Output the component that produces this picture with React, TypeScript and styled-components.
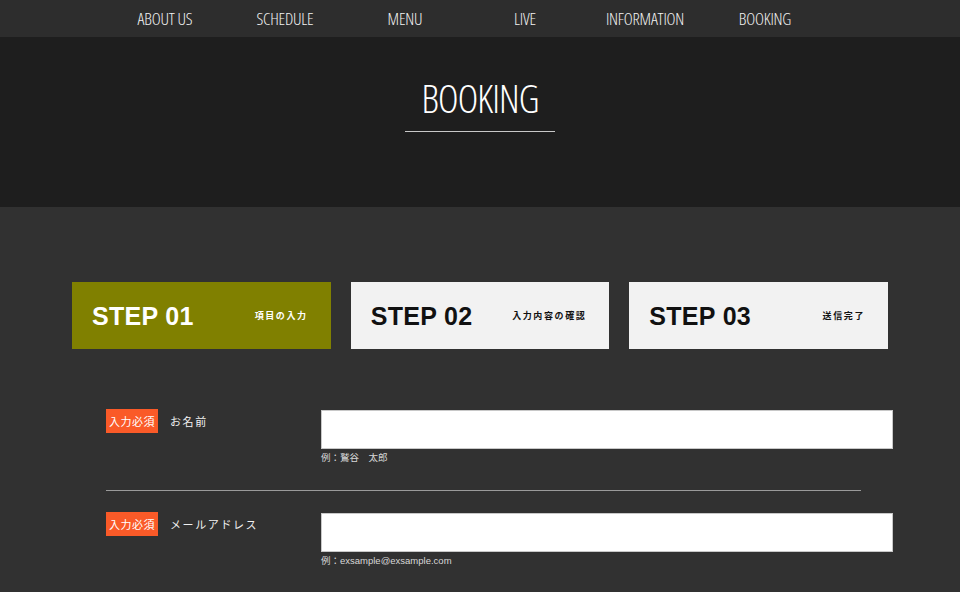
import React from 'react';
import styled, { createGlobalStyle } from 'styled-components';

const navItems = ['ABOUT US', 'SCHEDULE', 'MENU', 'LIVE', 'INFORMATION', 'BOOKING'];

const steps = [
	{ no: '01', label: '項目の入力', active: true },
	{ no: '02', label: '入力内容の確認', active: false },
	{ no: '03', label: '送信完了', active: false },
];

const fields = [
	{ label: 'お名前', example: '例：鷲谷　太郎', type: 'text' },
	{ label: 'メールアドレス', example: '例：exsample@exsample.com', type: 'email' },
];

const App: React.FC = () => {
	return (
		<Page>
			<GlobalStyle />
			<Nav>
				<NavList>
					{navItems.map((item) => (
						<NavItem key={item}>{item}</NavItem>
					))}
				</NavList>
			</Nav>
			<Hero>
				<HeroTitle>BOOKING</HeroTitle>
			</Hero>
			<Main>
				<Steps>
					{steps.map((step) => (
						<StepBox key={step.no} $active={step.active}>
							<StepNo>STEP {step.no}</StepNo>
							<StepLabel>{step.label}</StepLabel>
						</StepBox>
					))}
				</Steps>
				<Form>
					{fields.map((field, i) => (
						<React.Fragment key={field.label}>
							{i > 0 && <Divider />}
							<FormRow>
								<LabelCell>
									<Required>入力必須</Required>
									<FieldLabel>{field.label}</FieldLabel>
								</LabelCell>
								<InputCell>
									<TextInput type={field.type} />
									<Example>{field.example}</Example>
								</InputCell>
							</FormRow>
						</React.Fragment>
					))}
				</Form>
			</Main>
		</Page>
	);
};

export default App;

const GlobalStyle = createGlobalStyle`
	html, body {
		margin: 0;
		padding: 0;
		background: #313131;
	}
	body {
		font-family: 'Liberation Sans', 'Noto Sans CJK JP', sans-serif;
	}
`;

const Page = styled.div`
	min-height: 592px;
	background: #313131;
	overflow: hidden;
`;

const Nav = styled.nav`
	height: 37px;
	background: #2d2d2d;
	display: flex;
	justify-content: center;
	padding-right: 30px;
`;

const NavList = styled.ul`
	display: flex;
	margin: 0;
	padding: 0;
	list-style: none;
`;

const NavItem = styled.li`
	width: 120px;
	text-align: center;
	line-height: 38px;
	font-family: 'Open Sans', sans-serif;
	font-stretch: 75%;
	font-weight: 300;
	font-size: 17px;
	letter-spacing: -0.2px;
	color: #f2f2f2;
`;

const Hero = styled.header`
	height: 170px;
	box-sizing: border-box;
	padding-top: 37px;
	background: #1e1e1e;
	display: flex;
	justify-content: center;
	align-items: flex-start;
`;

const HeroTitle = styled.h1`
	margin: 0;
	width: 150px;
	padding-bottom: 9px;
	border-bottom: 1px solid #c8c8c8;
	text-align: center;
	font-family: 'Open Sans', sans-serif;
	font-stretch: 75%;
	font-weight: 300;
	font-size: 39px;
	letter-spacing: -0.9px;
	line-height: 48px;
	color: #ffffff;
`;

const Main = styled.main`
	padding-top: 75px;
	padding-bottom: 40px;
`;

const Steps = styled.div`
	width: 816px;
	margin: 0 auto;
	display: grid;
	grid-template-columns: repeat(3, 1fr);
	gap: 20px;
`;

const StepBox = styled.div<{ $active: boolean }>`
	height: 67px;
	box-sizing: border-box;
	padding: 0 23px 0 20px;
	display: flex;
	align-items: center;
	justify-content: space-between;
	background: ${(p) => (p.$active ? '#808000' : '#f2f2f2')};
	color: ${(p) => (p.$active ? '#ffffff' : '#111111')};
`;

const StepNo = styled.span`
	font-family: 'Liberation Sans', Arial, sans-serif;
	font-weight: 700;
	font-size: 25px;
	letter-spacing: 0.3px;
	padding-top: 2px;
`;

const StepLabel = styled.span`
	font-family: 'Noto Sans CJK JP', sans-serif;
	font-weight: 700;
	font-size: 9px;
	letter-spacing: 1.6px;
`;

const Form = styled.div`
	width: 816px;
	margin: 60px auto 0;
	box-sizing: border-box;
	padding-left: 34px;
`;

const FormRow = styled.div`
	display: grid;
	grid-template-columns: 215px 572px;
	align-items: start;
`;

const LabelCell = styled.div`
	display: flex;
	align-items: center;
	gap: 12px;
`;

const Required = styled.span`
	display: inline-flex;
	align-items: center;
	justify-content: center;
	width: 52px;
	height: 24px;
	background: #fa5a28;
	color: #ffffff;
	font-family: 'Noto Sans CJK JP', sans-serif;
	font-size: 11px;
	letter-spacing: 0.5px;
`;

const FieldLabel = styled.span`
	color: #f0f0f0;
	font-family: 'Noto Sans CJK JP', sans-serif;
	font-size: 11px;
	letter-spacing: 1.6px;
`;

const InputCell = styled.div`
	padding-top: 1px;
`;

const TextInput = styled.input`
	display: block;
	width: 572px;
	height: 39px;
	box-sizing: border-box;
	margin: 0;
	background: #ffffff;
	border: 1px solid #c8c8c8;
	outline: 0;
`;

const Example = styled.div`
	margin-top: 2px;
	font-size: 9.5px;
	line-height: 14px;
	color: #d8d8d8;
	font-family: 'Liberation Sans', 'Noto Sans CJK JP', sans-serif;
`;

const Divider = styled.hr`
	width: 755px;
	margin: 25px 0 21px;
	border: 0;
	border-top: 1px solid #9a9a9a;
`;
